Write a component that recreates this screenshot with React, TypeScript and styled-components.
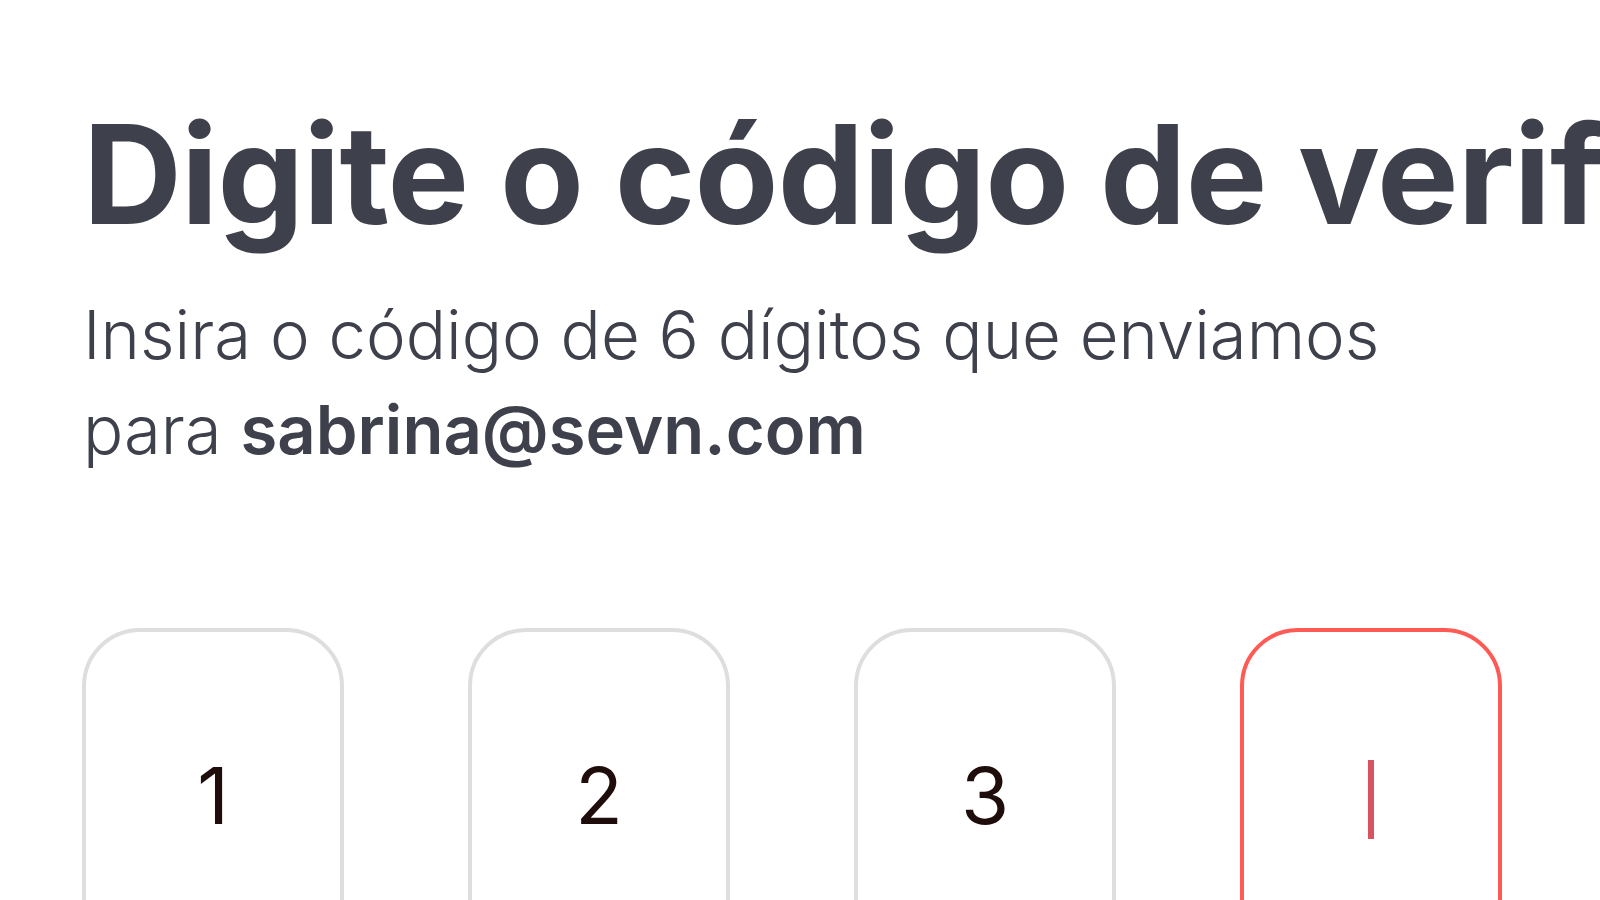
import styled, { createGlobalStyle } from "styled-components";

const GlobalStyle = createGlobalStyle`
  html, body {
    margin: 0;
    padding: 0;
    background: #ffffff;
    overflow: hidden;
  }
  body {
    font-family: "Inter", "Noto Sans", sans-serif;
  }
`;

const Page = styled.main`
  width: 1600px;
  height: 900px;
  padding: 106px 0 0 82px;
  box-sizing: border-box;
  overflow: hidden;
`;

const Title = styled.h1`
  margin: 0 0 0 1px;
  font-size: 137px;
  font-weight: 700;
  line-height: 1;
  letter-spacing: -0.006em;
  color: #3e414b;
  white-space: nowrap;
`;

const Subtitle = styled.p`
  margin: 44px 0 0 1px;
  max-width: 1440px;
  font-size: 67px;
  font-weight: 300;
  line-height: 95px;
  letter-spacing: 0;
  color: #3e414b;
`;

const Email = styled.strong`
  font-weight: 600;
`;

const CodeRow = styled.div`
  display: flex;
  gap: 124px;
  margin-top: 151px;
`;

const CodeBox = styled.div<{ $active?: boolean }>`
  width: 262px;
  height: 335px;
  flex: none;
  box-sizing: border-box;
  display: flex;
  align-items: center;
  justify-content: center;
  border: 4px solid ${(p) => (p.$active ? "#ff5a54" : "#dedede")};
  border-radius: 58px;
  font-size: 78px;
  font-weight: 400;
  color: #1f0d0b;
`;

const Caret = styled.span`
  display: block;
  width: 6px;
  height: 79px;
  margin-top: 8px;
  background: #d9525f;
`;

const digits = ["1", "2", "3"];

export default function App() {
  return (
    <>
      <GlobalStyle />
      <Page>
        <Title>Digite o código de verificação</Title>
        <Subtitle>
          Insira o código de 6 dígitos que enviamos para{" "}
          <Email>sabrina@sevn.com</Email>
        </Subtitle>
        <CodeRow>
          {digits.map((d) => (
            <CodeBox key={d}>{d}</CodeBox>
          ))}
          <CodeBox $active>
            <Caret />
          </CodeBox>
        </CodeRow>
      </Page>
    </>
  );
}
